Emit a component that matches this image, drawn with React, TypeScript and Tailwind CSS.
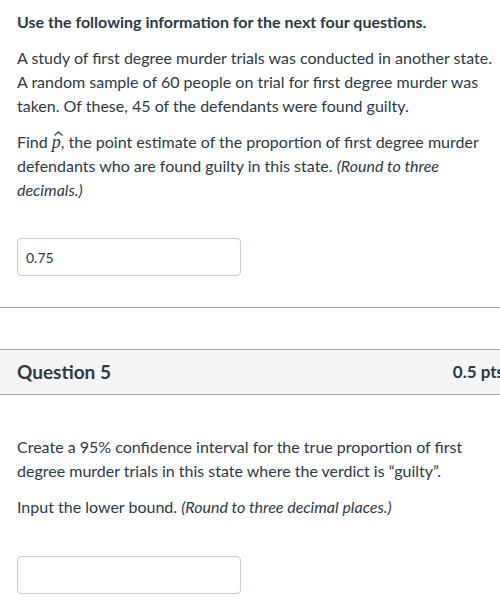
import React from "react";

export default function App() {
  return (
    <div
      className="w-[500px] h-[609px] overflow-hidden bg-white text-[#2d3b45]"
      style={{ fontFamily: "Lato, 'Open Sans', sans-serif" }}
    >
      <div className="pl-[17px] pr-[6px] pt-[10px]">
        <p className="text-[16px] leading-[24px] font-bold">
          Use the following information for the next four questions.
        </p>
        <p className="mt-[12px] text-[16px] leading-[24px]">
          A study of first degree murder trials was conducted in another state. A random sample of 60 people on trial for first degree murder was taken. Of these, 45 of the defendants were found guilty.
        </p>
        <p className="mt-[12px] text-[16px] leading-[24px]">
          Find{" "}
          <span
            className="relative italic leading-none text-[18px]"
            style={{ fontFamily: "'Liberation Serif', serif", fontStyle: "italic" }}
          >
            p
            <svg
              className="absolute left-[2px] top-[-1px]"
              width="9"
              height="5"
              viewBox="0 0 9 5"
            >
              <path d="M0.5 4.5 L4.5 0.8 L8.5 4.5" fill="none" stroke="#2d3b45" strokeWidth="1.2" />
            </svg>
          </span>
          , the point estimate of the proportion of first degree murder defendants who are found guilty in this state. <em>(Round to three decimals.)</em>
        </p>
        <div className="mt-[36px] w-[224px] h-[38px] border border-[#c7cdd1] rounded-[4px] flex items-center px-[8px] text-[14px]">
          0.75
        </div>
      </div>
      <div className="mt-[31px] border-t border-[#a5a5a5]" />
      <div className="mt-[41px] w-[504px] h-[46px] bg-[#f5f5f5] border-y border-[#a5a5a5] flex items-center justify-between pl-[17px] pr-0">
        <span className="text-[19px] font-bold">Question 5</span>
        <span className="text-[17px] font-bold">0.5 pts</span>
      </div>
      <div className="pl-[17px] pr-[6px]">
        <p className="mt-[40px] text-[16px] leading-[24px]">
          Create a 95% confidence interval for the true proportion of first degree murder trials in this state where the verdict is “guilty”.
        </p>
        <p className="mt-[12px] text-[16px] leading-[24px]">
          Input the lower bound. <em>(Round to three decimal places.)</em>
        </p>
        <div className="mt-[37px] w-[224px] h-[38px] border border-[#c7cdd1] rounded-[4px]" />
      </div>
    </div>
  );
}
